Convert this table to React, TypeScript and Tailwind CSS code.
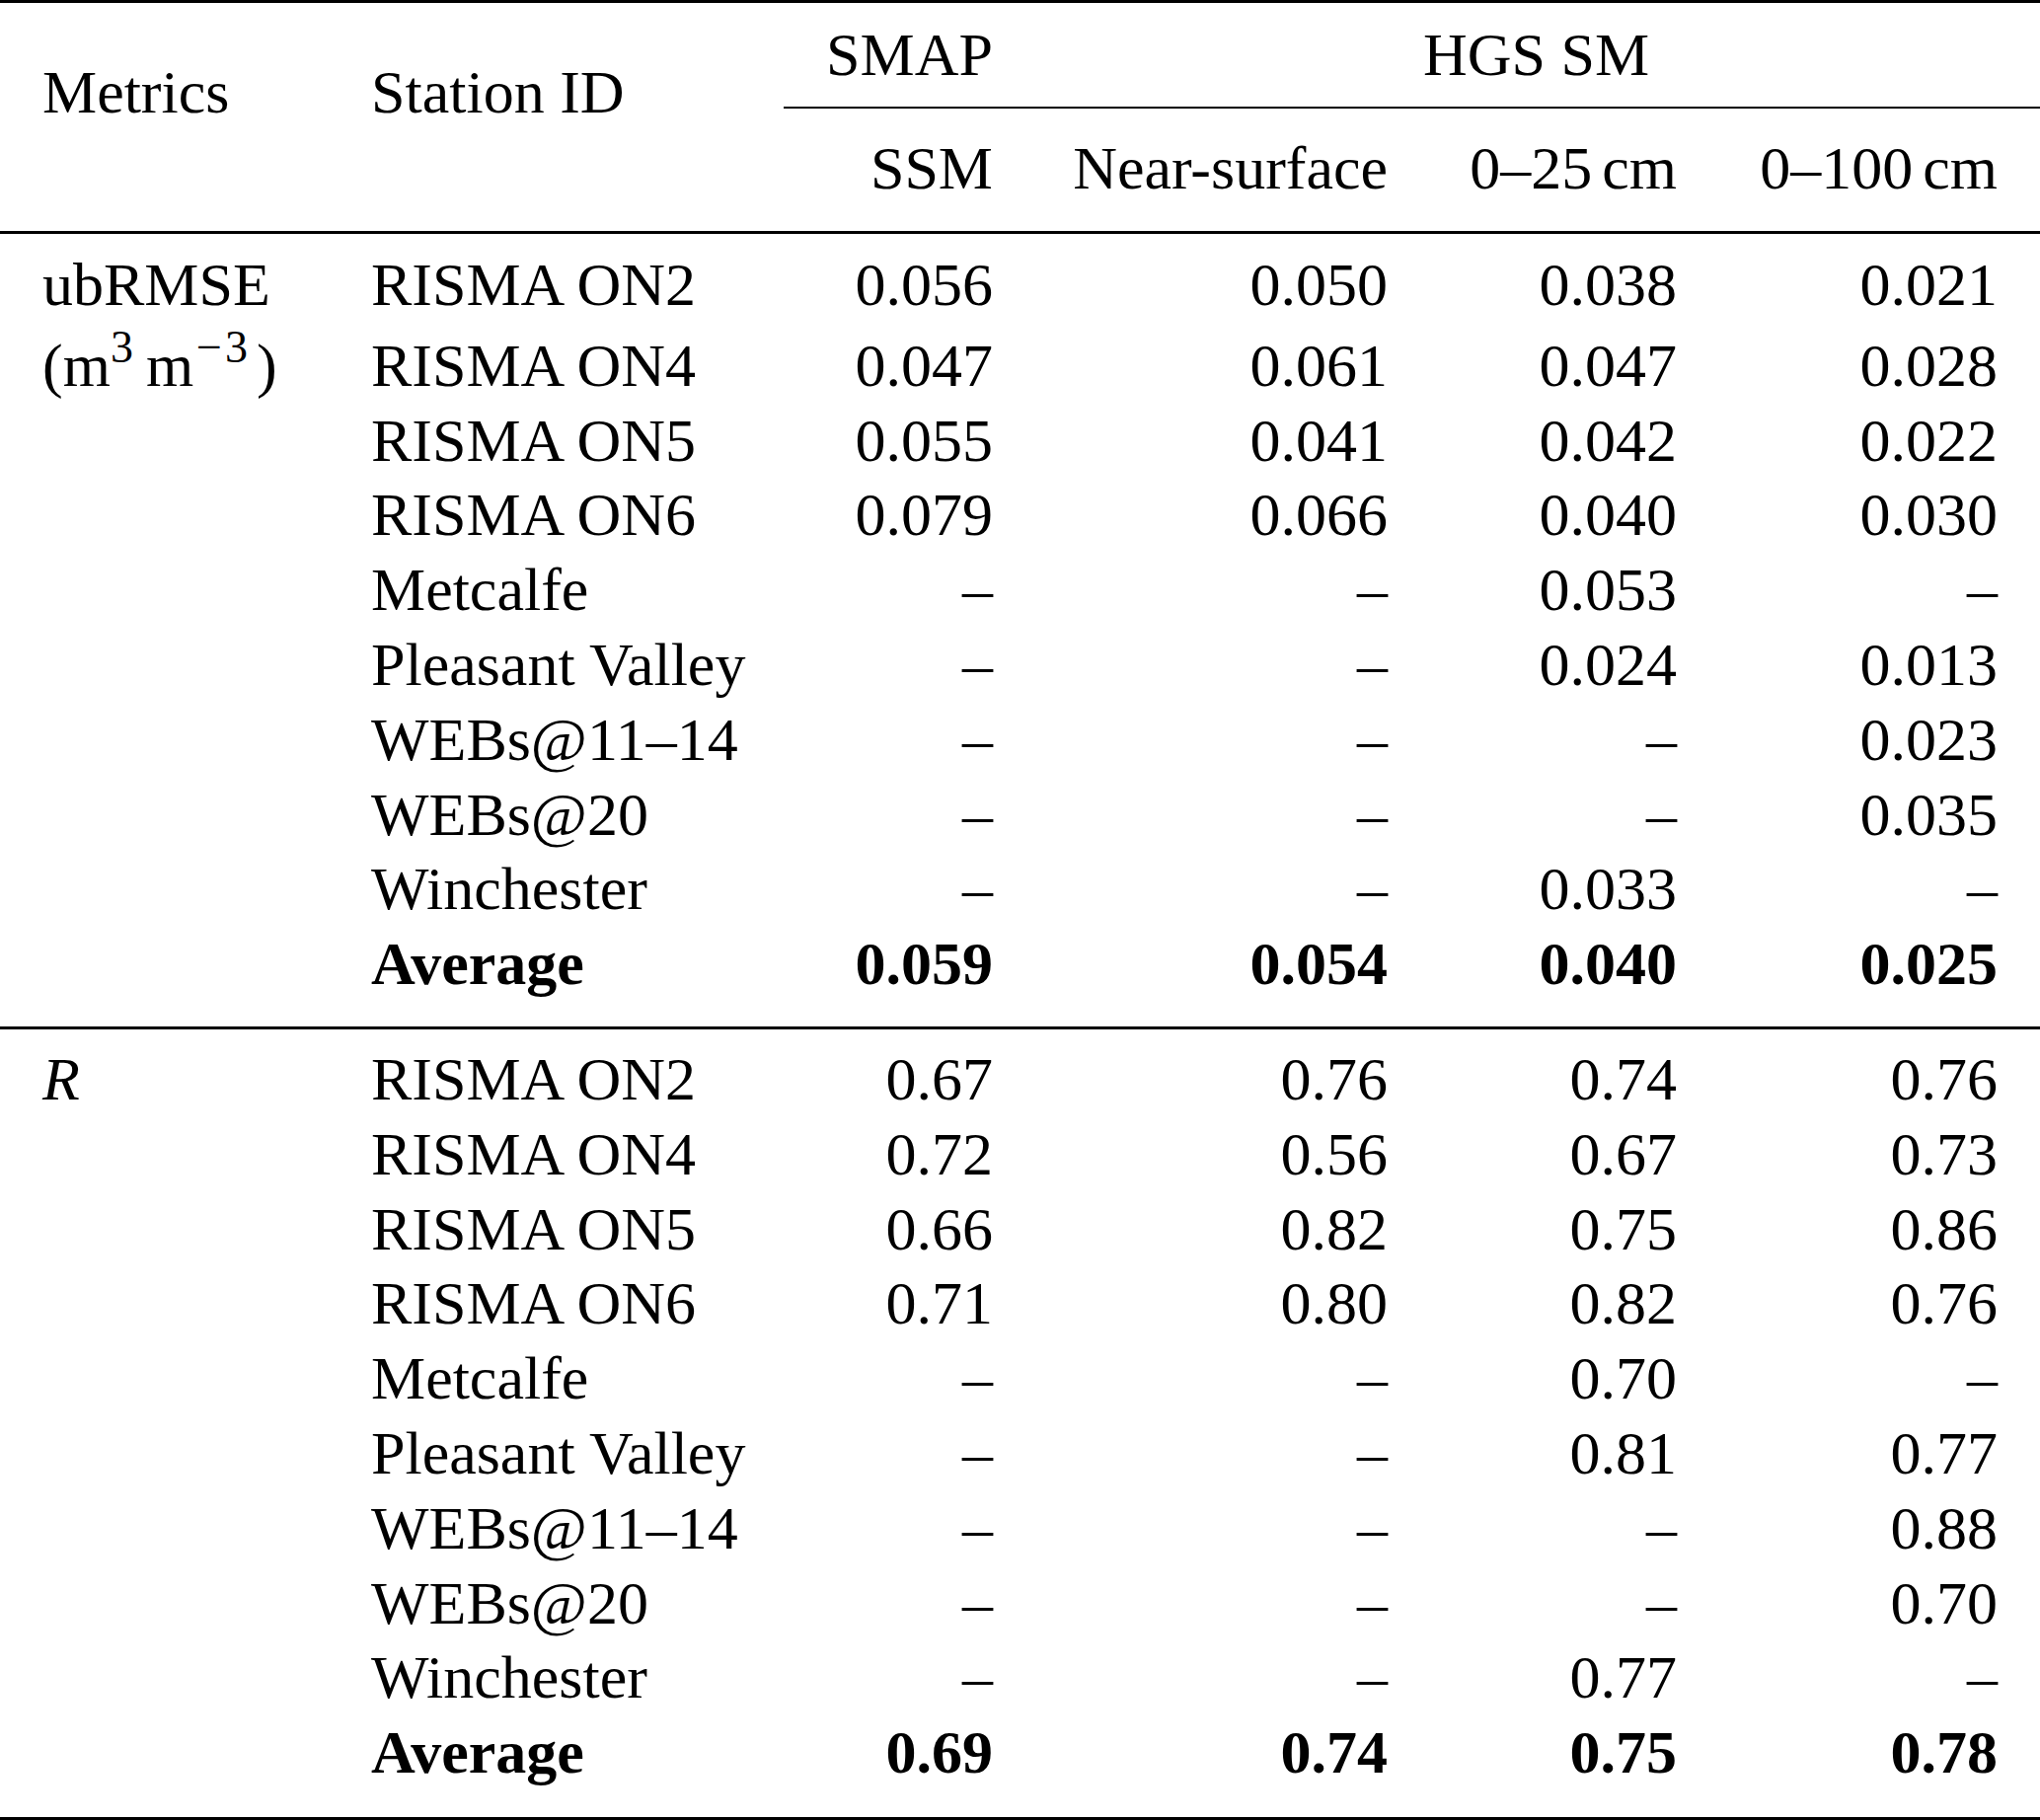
import React from "react";

const COLS = "grid grid-cols-[333px_461px_253px_401px_294px_325px]";

type RowProps = {
  m?: React.ReactNode;
  s: string;
  v: string[];
  bold?: boolean;
  extra?: boolean;
};

function DataRow({ m, s, v, bold, extra }: RowProps) {
  return (
    <div
      className={`${COLS} leading-[75.8px] ${extra ? "pt-[6px]" : ""} ${
        bold ? "font-bold" : ""
      }`}
    >
      <div className="pl-[43px] whitespace-nowrap">{m}</div>
      <div className="pl-[43px] whitespace-nowrap">{s}</div>
      <div className="pr-[41px] text-right whitespace-nowrap">{v[0]}</div>
      <div className="pr-[42px] text-right whitespace-nowrap">{v[1]}</div>
      <div className="pr-[43px] text-right whitespace-nowrap">{v[2]}</div>
      <div className="pr-[43px] text-right whitespace-nowrap">{v[3]}</div>
    </div>
  );
}

const D = "–";

const stations = [
  "RISMA ON2",
  "RISMA ON4",
  "RISMA ON5",
  "RISMA ON6",
  "Metcalfe",
  "Pleasant Valley",
  "WEBs@11–14",
  "WEBs@20",
  "Winchester",
];

const ub: string[][] = [
  ["0.056", "0.050", "0.038", "0.021"],
  ["0.047", "0.061", "0.047", "0.028"],
  ["0.055", "0.041", "0.042", "0.022"],
  ["0.079", "0.066", "0.040", "0.030"],
  [D, D, "0.053", D],
  [D, D, "0.024", "0.013"],
  [D, D, D, "0.023"],
  [D, D, D, "0.035"],
  [D, D, "0.033", D],
];
const ubAvg = ["0.059", "0.054", "0.040", "0.025"];

const rr: string[][] = [
  ["0.67", "0.76", "0.74", "0.76"],
  ["0.72", "0.56", "0.67", "0.73"],
  ["0.66", "0.82", "0.75", "0.86"],
  ["0.71", "0.80", "0.82", "0.76"],
  [D, D, "0.70", D],
  [D, D, "0.81", "0.77"],
  [D, D, D, "0.88"],
  [D, D, D, "0.70"],
  [D, D, "0.77", D],
];
const rAvg = ["0.69", "0.74", "0.75", "0.78"];

function Unit() {
  return (
    <span>
      (m
      <span className="relative top-[-24px] text-[46px] leading-none">3</span>
      <span className="ml-[13px]">m</span>
      <span className="relative top-[-24px] text-[46px] leading-none">
        <span className="pl-[3px] pr-[3px]">−</span>3
      </span>
      <span className="ml-[9px]">)</span>
    </span>
  );
}

export default function App() {
  return (
    <div className="w-[2067px] h-[1844px] bg-white text-black font-['Liberation_Serif','Times_New_Roman',serif] text-[62px]">
      {/* Header */}
      <div className="border-t-[3px] border-b-[3px] border-black">
        <div className={`${COLS} grid-rows-[107px_124px] leading-[75.8px]`}>
          <div className="row-span-2 col-start-1 row-start-1 pl-[43px] pt-[53px] whitespace-nowrap">
            Metrics
          </div>
          <div className="row-span-2 col-start-2 row-start-1 pl-[43px] pt-[53px] whitespace-nowrap">
            Station ID
          </div>
          <div className="col-start-3 row-start-1 border-b-[2px] border-black pt-[15px]">
            <div className="pl-[43px] pr-[41px] text-center whitespace-nowrap">SMAP</div>
          </div>
          <div className="col-start-4 col-span-3 row-start-1 border-b-[2px] border-black pt-[15px]">
            <div className="pl-[42px] pr-[43px] text-center whitespace-nowrap">HGS SM</div>
          </div>
          <div className="col-start-3 row-start-2 pt-[23px] pr-[41px] text-right whitespace-nowrap">
            SSM
          </div>
          <div className="col-start-4 row-start-2 pt-[23px] pr-[42px] text-right whitespace-nowrap">
            Near-surface
          </div>
          <div className="col-start-5 row-start-2 pt-[23px] pr-[43px] text-right whitespace-nowrap">
            0–25<span className="ml-[10px]">cm</span>
          </div>
          <div className="col-start-6 row-start-2 pt-[23px] pr-[43px] text-right whitespace-nowrap">
            0–100<span className="ml-[10px]">cm</span>
          </div>
        </div>
      </div>

      {/* ubRMSE section */}
      <div className="pt-[14px] pb-[25px] border-b-[3px] border-black">
        {stations.map((s, i) => (
          <DataRow
            key={s}
            s={s}
            v={ub[i]}
            extra={i === 1}
            m={i === 0 ? "ubRMSE" : i === 1 ? <Unit /> : undefined}
          />
        ))}
        <DataRow s="Average" v={ubAvg} bold />
      </div>

      {/* R section */}
      <div className="pt-[13px] pb-[27px] border-b-[3px] border-black">
        {stations.map((s, i) => (
          <DataRow
            key={s}
            s={s}
            v={rr[i]}
            m={i === 0 ? <span className="italic">R</span> : undefined}
          />
        ))}
        <DataRow s="Average" v={rAvg} bold />
      </div>
    </div>
  );
}
